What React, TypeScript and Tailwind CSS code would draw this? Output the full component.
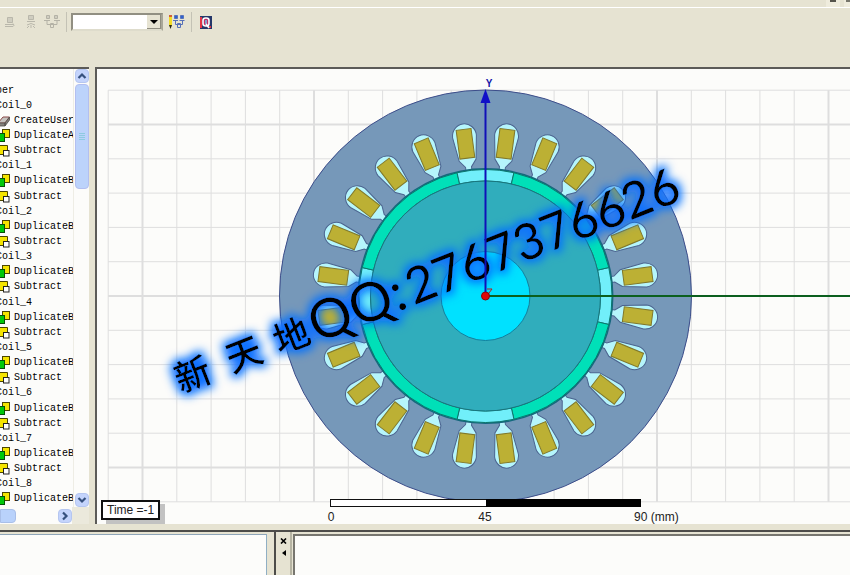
import type { ReactNode } from "react";

type Kind = "coil" | "create" | "duplicate" | "subtract";

const tree: { kind: Kind; label: string }[] = [{ kind: "coil", label: "per" }];
for (let i = 0; i <= 8; i++) {
  tree.push({ kind: "coil", label: `Coil_${i}` });
  if (i === 0) tree.push({ kind: "create", label: "CreateUser" });
  tree.push({ kind: "duplicate", label: i === 0 ? "DuplicateA" : "DuplicateB" });
  if (i < 8) tree.push({ kind: "subtract", label: "Subtract" });
}

function TreeIcon({ kind }: { kind: Kind }) {
  return (
    <svg viewBox="0 0 14 14" className="h-3.5 w-3.5 shrink-0" aria-hidden="true">
      {kind === "create" && (
        <>
          <path d="M2 9 L7 3 H13.5 L9 9 Z" fill="#c4c2be" stroke="#8a4a48" />
          <path d="M2 9 H9 V12 H2 Z M9 9 L13.5 3 V6 L9 12 Z" fill="#85817c" stroke="#4f4b47" strokeWidth=".8" />
        </>
      )}
      {kind === "duplicate" && (
        <>
          <rect x="6.500" y=".5" width="7" height="8" fill="#f5e400" stroke="#4c4600" />
          <rect x="1.500" y="4.500" width="7" height="8" fill="#00c80a" stroke="#064f08" />
        </>
      )}
      {kind === "subtract" && (
        <>
          <path d="M3.500 1.500 H11.500 V6.500 H7.500 V10.500 H3.500 Z" fill="#f5e400" stroke="#4c4600" />
          <rect x="7.500" y="6.500" width="5.500" height="5.500" fill="#fff" stroke="#222" />
        </>
      )}
    </svg>
  );
}

function ScrollButton({ label, path }: { label: string; path: string }) {
  return (
    <button
      type="button"
      aria-label={label}
      className="flex h-3.5 w-3.5 shrink-0 items-center justify-center rounded-sm border border-[#b5c6f0] bg-[#c4d4fc]"
    >
      <svg viewBox="0 0 10 10" className="h-2.5 w-2.5">
        <path d={path} fill="none" stroke="#36517e" strokeWidth="2.2" />
      </svg>
    </button>
  );
}

function ToolButton({ label, children }: { label: string; children: ReactNode }) {
  return (
    <button type="button" aria-label={label} className="flex h-5 shrink-0 items-center">
      {children}
    </button>
  );
}

function Toolbar() {
  return (
    <header className="h-[67px] shrink-0">
      <div className="flex h-2 justify-end gap-1 overflow-hidden border-b border-white">
        <button type="button" aria-label="Minimize" className="flex w-3.5 justify-center bg-[#efecdd]">
          <span className="h-0.5 w-1.5 bg-[#55544c]" />
        </button>
        <button type="button" aria-label="Restore" className="flex w-1.5 justify-end bg-[#efecdd]">
          <span className="h-0.5 w-1 bg-[#77766c]" />
        </button>
      </div>
      <div className="flex h-7 items-center pl-1">
        <ToolButton label="Computer">
          <svg viewBox="0 0 16 16" className="h-4 w-4" fill="none" stroke="#b9b7ab">
            <path d="M3.500 3.500 h5 v5 h-5 z" fill="#cfcdc0" />
            <path d="M1 10.500 h8 M1 12.500 h8 q2 -1 0 -3" />
          </svg>
        </ToolButton>
        <div className="w-1" />
        <ToolButton label="Broadcast">
          <svg viewBox="0 0 16 16" className="h-4 w-4" fill="none" stroke="#b9b7ab">
            <path d="M4.500 1.500 h5 v4 h-5 z" fill="#cfcdc0" />
            <path d="M3 7.500 h8 M3 11 q4 -3 8 0 M3 14 l2 -2 M11 14 l-2 -2 M7 11 v3" />
          </svg>
        </ToolButton>
        <div className="w-1" />
        <ToolButton label="Network">
          <svg viewBox="0 0 16 16" className="h-4 w-4" fill="none" stroke="#b4b2a6">
            <path d="M2.500 1.500 h3 v3 h-3 z M10.500 1.500 h3 v3 h-3 z" fill="#cfcdc0" />
            <path d="M0 6.500 h6 M10 6.500 h6 M3 7 v3.500 h10 V7 M6.500 9.500 h3 v4 h-3 z" />
          </svg>
        </ToolButton>
        <div className="mr-1 ml-1.5 h-5 w-px bg-[#c4c2b5]" />
        <div className="relative">
          <select
            aria-label="Machine"
            className="block h-[18px] w-[92px] appearance-none border-2 border-[#918f82] border-r-[#a9a798] border-b-[#dedccc] bg-white text-xs"
          >
            <option></option>
          </select>
          <span className="pointer-events-none absolute inset-y-0.5 right-0.5 flex w-3.5 items-center justify-center border-r border-b border-[#8f8d80] bg-[#e6e3d2]">
            <svg viewBox="0 0 8 4" className="h-1 w-2">
              <path d="M0 0 H8 L4 4 Z" fill="#000" />
            </svg>
          </span>
        </div>
        <div className="w-1.5" />
        <ToolButton label="Edit network">
          <svg viewBox="0 0 16 16" className="h-4 w-4">
            <path d="M0 1 h3 v10 l-1.500 3 l-1.500 -3 z" fill="#f2dc25" />
            <path d="M0 11 h3 l-1.500 4 z" fill="#2c2a16" />
            <path d="M0 1 h3 v2 h-3 z" fill="#d26038" />
            <path d="M5.500 1.500 h3 v3 h-3 z M11.500 1.500 h3 v3 h-3 z" fill="#2f62d0" stroke="#5a74b8" />
            <path d="M4 6.500 h5 M10.500 6.500 h5 M6.500 7 v3.500 h7 V7 M8.500 9.500 h3 v4 h-3 z" fill="none" stroke="#5670b8" />
          </svg>
        </ToolButton>
        <div className="mx-2 ml-1.5 h-5 w-px bg-[#c4c2b5]" />
        <ToolButton label="Queue">
          <svg viewBox="0 0 12 13" className="h-[13px] w-3">
            <path d="M0 0 H12 V13 H0 Z" fill="#253769" />
            <path d="M0 1 h2 v11 h-2 z M9 10 h2 v2 h-2 z" fill="#e03546" />
            <rect x="3" y="2" width="6" height="8" rx="2.500" fill="#c22f6a" stroke="#fff" strokeWidth="1.600" />
            <path d="M6 4 v4" stroke="#6fc5e8" strokeWidth="1.500" />
            <path d="M6 8 l3 4" stroke="#fff" strokeWidth="1.500" />
          </svg>
        </ToolButton>
      </div>
    </header>
  );
}

function ModelTree() {
  return (
    <aside className="flex w-[89px] shrink-0 flex-col border-t-2 border-[#5c5b58] bg-[#fcfcfa]">
      <div className="flex min-h-0 flex-1">
        <ul className="flex min-w-0 flex-1 flex-col overflow-hidden pt-3.5 font-['Liberation_Mono','DejaVu_Sans_Mono',monospace] text-[10px] leading-none text-black">
          {tree.map((item, i) => (
            <li key={i} className="-ml-1 flex min-h-0 flex-1 items-center gap-1 whitespace-nowrap">
              {item.kind !== "coil" && <TreeIcon kind={item.kind} />}
              <span>{item.label}</span>
            </li>
          ))}
        </ul>
        <div className="flex w-4 shrink-0 flex-col items-center border-l border-[#eeede5]">
          <ScrollButton label="Scroll up" path="M1.500 7 L5 3.500 L8.500 7" />
          <div className="mt-px flex h-[105px] w-3.5 flex-col items-center justify-center gap-px rounded-sm border border-[#b3bff0] bg-[#bcd3fb]">
            <span className="h-px w-1.5 bg-[#8ecbe0]" />
            <span className="h-px w-1.5 bg-[#8ecbe0]" />
            <span className="h-px w-1.5 bg-[#8ecbe0]" />
            <span className="h-px w-1.5 bg-[#8ecbe0]" />
          </div>
          <div className="flex-1" />
          <ScrollButton label="Scroll down" path="M1.500 3 L5 6.500 L8.500 3" />
        </div>
      </div>
      <div className="flex h-[17px] shrink-0 items-center">
        <div className="h-3.5 w-4 rounded-r-sm border border-[#a9bfe8] bg-[#b9d2fb]" />
        <div className="flex-1" />
        <ScrollButton label="Scroll right" path="M3 1.500 L6.500 5 L3 8.500" />
        <div className="h-full w-[17px] bg-[#ebe9dc]" />
      </div>
    </aside>
  );
}

const CX = 485.5;
const CY = 296;
const STEP = 34.3;

const columns = Array.from({ length: 22 }, (_, i) => i - 11);
const rows = Array.from({ length: 13 }, (_, i) => i - 6);
const slots = Array.from({ length: 24 }, (_, i) => 7.5 + i * 15);

// point on a circle round the shaft, angle measured from the x axis
function polar(r: number, deg: number) {
  const a = (deg * Math.PI) / 180;
  return `${(r * Math.cos(a)).toFixed(2)} ${(r * Math.sin(a)).toFixed(2)}`;
}

function ringSector(from: number, to: number) {
  return `M${polar(126.5, from)} A126.5 126.5 0 0 1 ${polar(126.5, to)} L${polar(115, to)} A115 115 0 0 0 ${polar(115, from)} Z`;
}

const label = [
  { text: "新", x: -344, y: 3, size: 36, cjk: true },
  { text: "天", x: -289, y: 3, size: 36, cjk: true },
  { text: "地", x: -238, y: 3, size: 36, cjk: true },
  { text: "QQ:", x: -199, y: 6, size: 54, cjk: false },
  { text: "2767376626", x: -95, y: 6, size: 50, cjk: false },
];

function MotorView() {
  return (
    <section className="relative min-w-0 flex-1 overflow-hidden border-t-2 border-l-2 border-[#5c5b58] bg-[#fcfcfa]">
      <svg
        viewBox="97 69 753 456"
        preserveAspectRatio="xMinYMin slice"
        className="block h-full w-full font-['Liberation_Sans',Arial,sans-serif]"
        role="img"
        aria-label="Motor cross section"
      >
        <defs>
          <filter id="glow" x="-20%" y="-60%" width="140%" height="220%">
            <feMorphology in="SourceAlpha" operator="dilate" radius="3" />
            <feGaussianBlur stdDeviation="5" result="b" />
            <feFlood floodColor="#0a70ff" />
            <feComposite in2="b" operator="in" result="g" />
            <feMerge>
              <feMergeNode in="g" />
              <feMergeNode in="SourceGraphic" />
            </feMerge>
          </filter>
        </defs>

        {columns.map((n) => (
          <line
            key={n}
            x1={CX + n * STEP}
            x2={CX + n * STEP}
            y1={CY - 6 * STEP}
            y2={CY + 6 * STEP}
            stroke="#dedede"
            strokeWidth={n % 5 === 0 ? 2 : 1}
          />
        ))}
        {rows.map((n) => (
          <line
            key={n}
            x1={CX - 11 * STEP}
            x2="850"
            y1={CY + n * STEP}
            y2={CY + n * STEP}
            stroke="#dedede"
            strokeWidth={n % 5 === 0 ? 2 : 1}
          />
        ))}

        <g transform={`translate(${CX} ${CY})`}>
          <circle r="206" fill="#7698b9" stroke="#3c4d8a" />
          {slots.map((deg) => (
            <g key={deg} transform={`rotate(${deg})`}>
              <path
                d="M-3 -127 V-130 L-8.500 -137 L-12 -161 A12 12.500 0 0 1 12 -161 L8.500 -137 L3 -130 V-127 Z"
                fill="#b5f5fb"
                stroke="#4b638f"
              />
              <rect x="-7.500" y="-168" width="15" height="29" fill="#bcb034" stroke="#80782a" />
            </g>
          ))}
          <circle r="128" fill="#16677e" />
          {[0, 90, 180, 270].map((deg) => (
            <g key={deg} stroke="#0c776d" strokeWidth="1">
              <path d={ringSector(deg - 13, deg + 13)} fill="#71effa" />
              <path d={ringSector(deg + 13, deg + 77)} fill="#00e0b8" />
            </g>
          ))}
          <circle r="115" fill="#30adbc" stroke="#19757d" />
          <circle r="44.500" fill="#00e1ff" stroke="#147f9c" />
        </g>

        <g filter="url(#glow)">
          <g transform="translate(500 265) rotate(-21.400)" fill="#000">
            {label.map((part) => (
              <text
                key={part.text}
                x={part.x}
                y={part.y}
                fontSize={part.size}
                className={
                  part.cjk
                    ? "font-['Noto_Sans_CJK_SC',sans-serif] font-medium"
                    : "font-['Lato',sans-serif]"
                }
              >
                {part.text}
              </text>
            ))}
          </g>
        </g>

        <path d="M485.500 296 H850" stroke="#0b5f1e" strokeWidth="2" />
        <path d="M485.500 296 V100" stroke="#1010b8" strokeWidth="2" />
        <path d="M485.500 89 L490.500 103 H480.500 Z" fill="#1010c8" />
        <text x="489" y="87" textAnchor="middle" fontSize="10" fontWeight="700" fill="#1414a8">
          Y
        </text>
        <path d="M487 289 H492 L487.500 295" fill="none" stroke="#c01818" />
        <circle cx="485.500" cy="296" r="4" fill="#e00808" stroke="#8c0808" />

        <rect x="330.500" y="499.500" width="310" height="7" fill="#fff" stroke="#111" />
        <rect x="486" y="499" width="155" height="8" fill="#000" />
        <g fontSize="12" fill="#222">
          <text x="331" y="521" textAnchor="middle">0</text>
          <text x="485" y="521" textAnchor="middle">45</text>
          <text x="634" y="521">90 (mm)</text>
        </g>
      </svg>
      <div className="absolute bottom-1 left-1 border-2 border-[#111] bg-white px-1 font-['Liberation_Sans',Arial,sans-serif] text-xs leading-4 text-[#222] shadow-[5px_4px_0_#c2c2c2]">
        Time =-1
      </div>
    </section>
  );
}

function BottomPanes() {
  return (
    <footer className="flex h-[45px] shrink-0 border-t-2 border-[#4d4c49]">
      <div className="mt-0.5 w-[267px] shrink-0 border-t border-r border-t-[#8ea5b8] border-r-[#8fafc4] bg-[#fcfcfa]" />
      <div className="w-[7px] shrink-0" />
      <div className="w-0.5 shrink-0 bg-[#4d4c49]" />
      <div className="mx-px flex w-[15px] shrink-0 flex-col items-center gap-1 border-r-2 border-[#b6b4a3] pt-1.5">
        <button type="button" aria-label="Close pane">
          <svg viewBox="0 0 7 6" className="block h-1.5 w-[7px]">
            <path d="M1 .5 L6 5.500 M6 .5 L1 5.500" stroke="#000" strokeWidth="1.600" />
          </svg>
        </button>
        <button type="button" aria-label="Collapse pane" className="pt-0.5">
          <svg viewBox="0 0 4 6" className="block h-1.5 w-1">
            <path d="M4 0 V6 L0 3 Z" fill="#000" />
          </svg>
        </button>
      </div>
      <div className="mt-0.5 min-w-0 flex-1 border-t-2 border-l-2 border-[#77766f] bg-[#fcfcfa]" />
    </footer>
  );
}

export default function App() {
  return (
    <div className="flex h-screen flex-col overflow-hidden bg-[#e6e3d2]">
      <Toolbar />
      <main className="flex min-h-0 flex-1 gap-1.5 pb-1.5">
        <ModelTree />
        <MotorView />
      </main>
      <BottomPanes />
    </div>
  );
}
